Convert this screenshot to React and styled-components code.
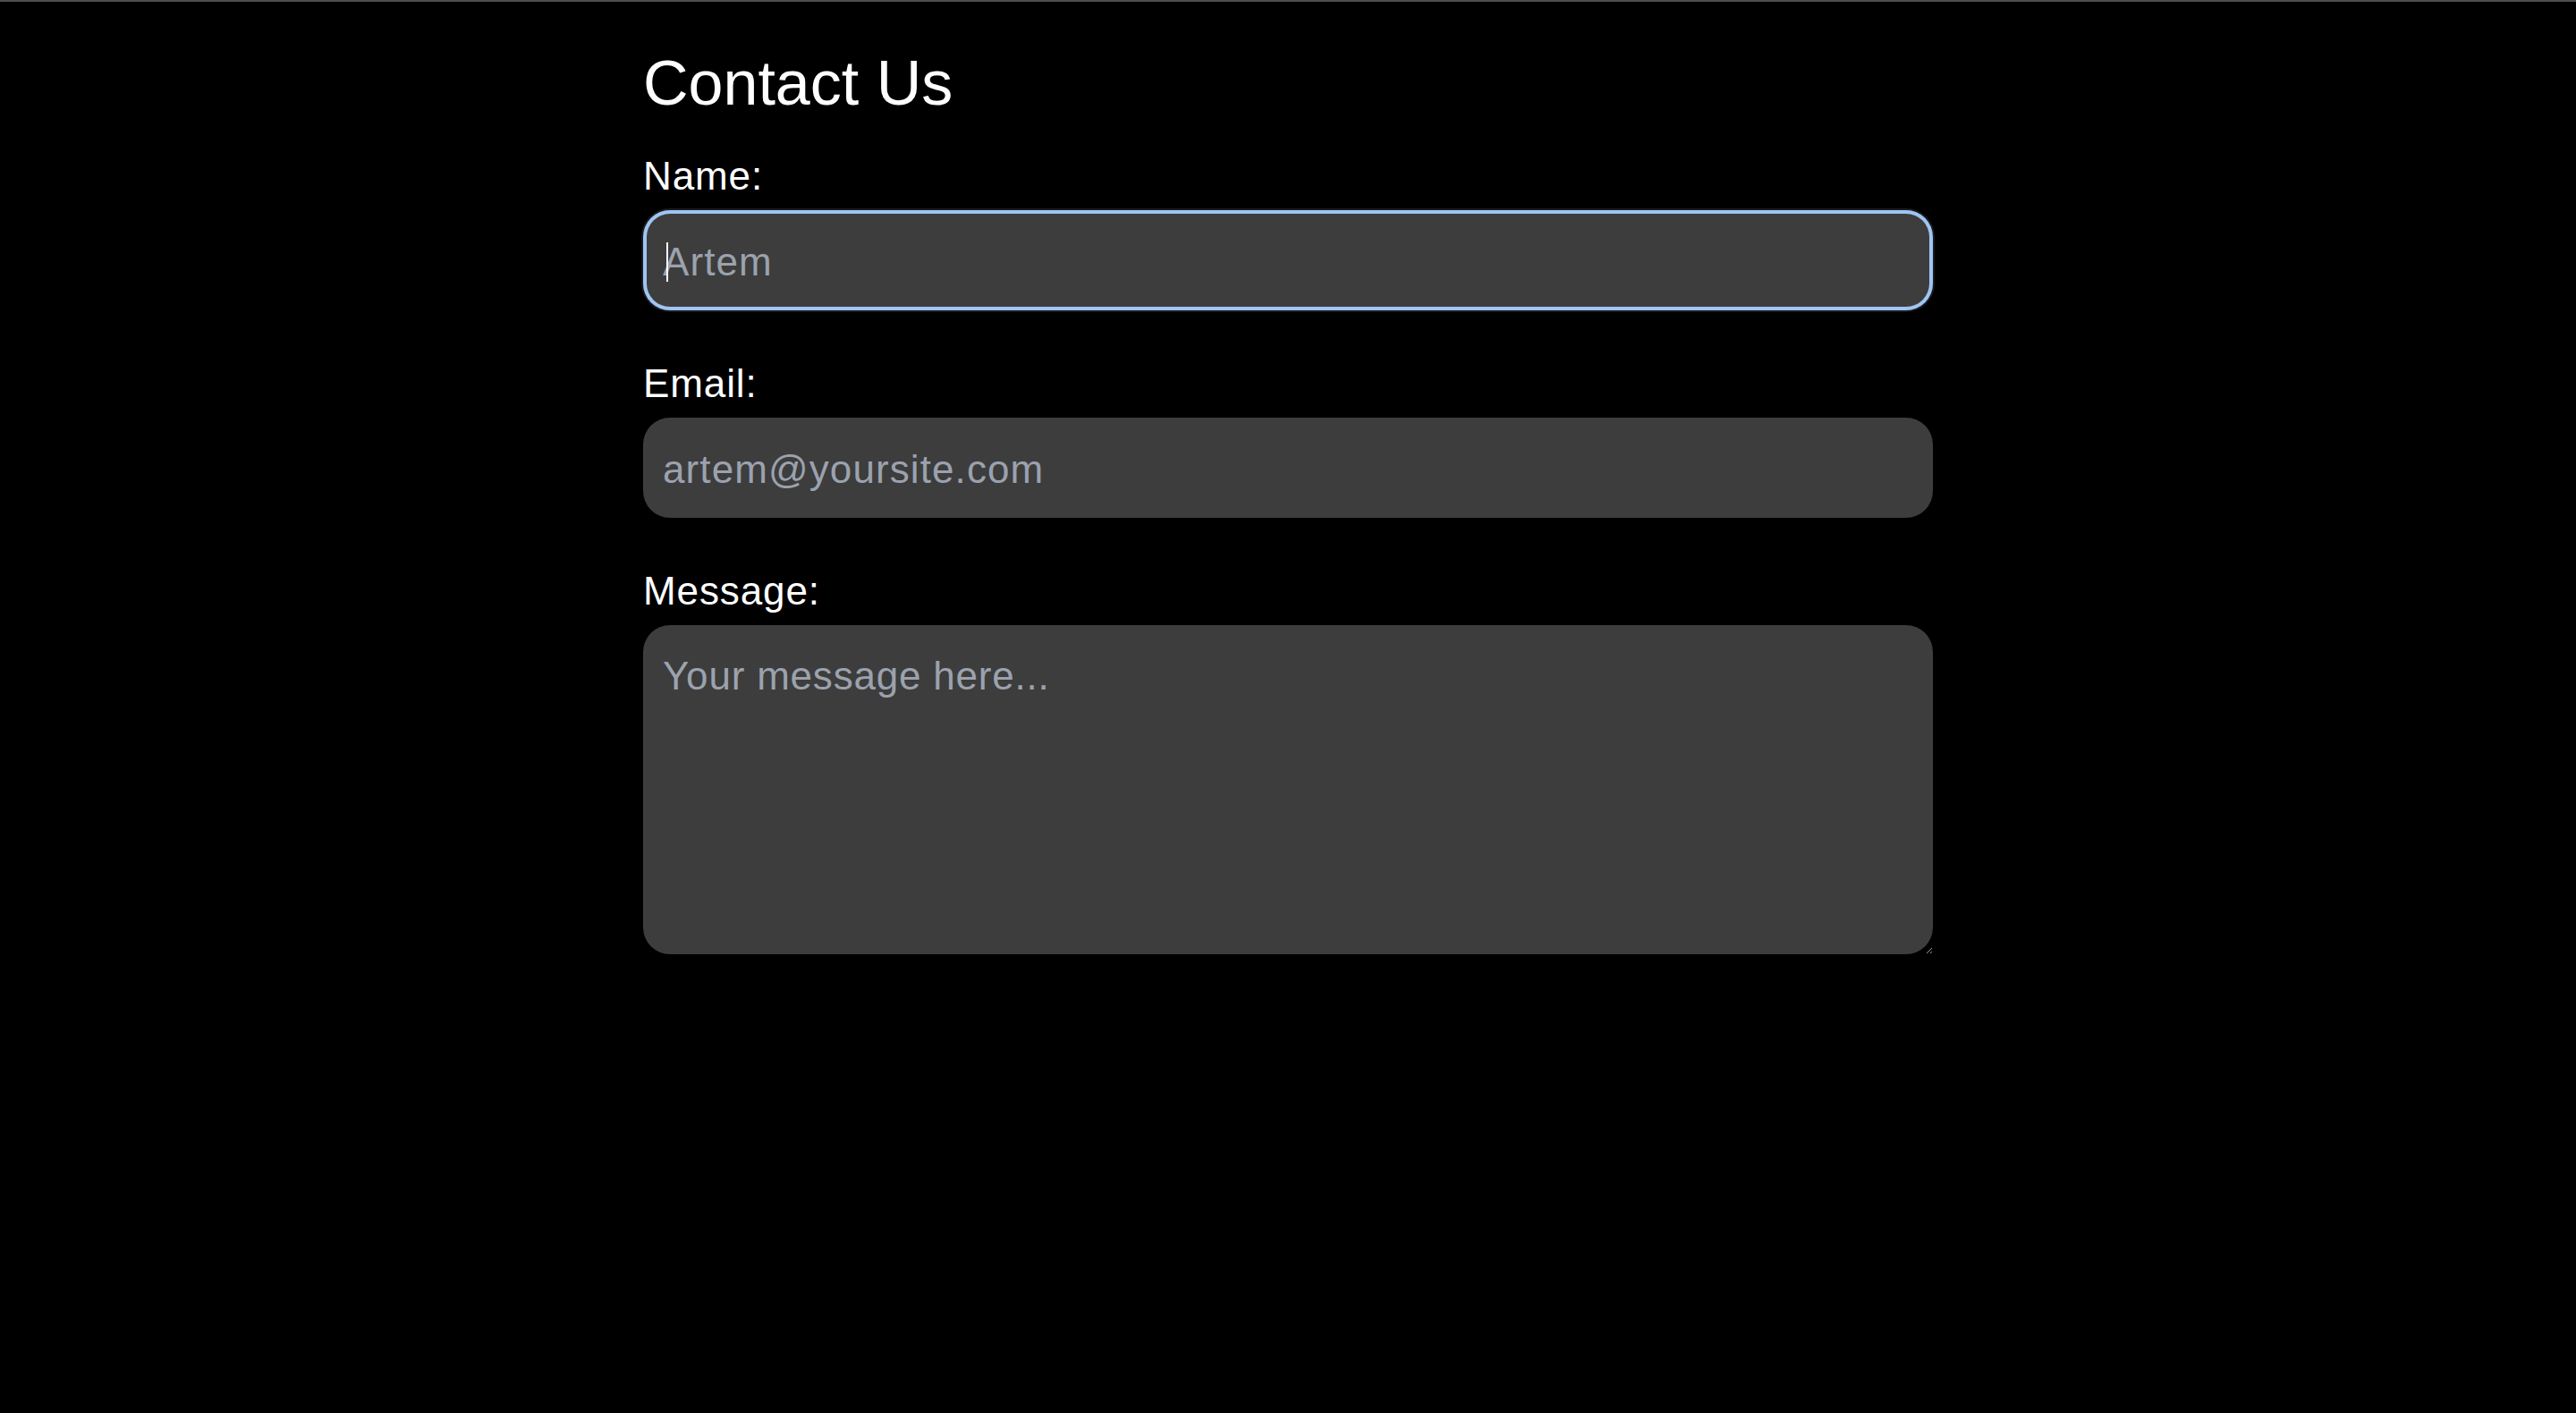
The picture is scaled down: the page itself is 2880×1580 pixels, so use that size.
import styled, { createGlobalStyle } from "styled-components";

const GlobalStyle = createGlobalStyle`
  html, body {
    margin: 0;
    padding: 0;
    background: #000000;
    min-height: 100%;
  }
  body {
    font-family: "Liberation Sans", Arial, sans-serif;
    color: #ffffff;
  }
  * {
    box-sizing: border-box;
  }
`;

const App = () => {
  return (
    <>
      <GlobalStyle />
      <Page>
        <FormContainer>
          <Title>Contact Us</Title>
          <Field>
            <Label htmlFor="name">Name:</Label>
            <CaretWrap>
              <Input id="name" type="text" placeholder="Artem" $active />
            </CaretWrap>
          </Field>
          <Field>
            <Label htmlFor="email">Email:</Label>
            <Input id="email" type="email" placeholder="artem@yoursite.com" />
          </Field>
          <Field>
            <Label htmlFor="message">Message:</Label>
            <TextArea id="message" placeholder="Your message here..." />
          </Field>
        </FormContainer>
      </Page>
    </>
  );
};

export default App;

const Page = styled.div`
  min-height: 1580px;
  border-top: 2px solid #4d4d4f;
  background: #000000;
`;

const FormContainer = styled.form`
  width: 1442px;
  margin: 0 auto;
  padding-top: 49px;
  display: flex;
  flex-direction: column;
  gap: 56px;
`;

const Title = styled.h1`
  margin: 0 0 -20px;
  font-size: 70px;
  line-height: 84px;
  font-weight: 400;
  color: #ffffff;
`;

const Field = styled.div`
  display: flex;
  flex-direction: column;
  gap: 12px;
`;

const Label = styled.label`
  font-size: 44px;
  line-height: 52px;
  letter-spacing: 0.9px;
  color: #ffffff;
`;

const CaretWrap = styled.div`
  position: relative;

  &::after {
    content: "";
    position: absolute;
    left: 26px;
    top: 36px;
    width: 2px;
    height: 44px;
    background: #ffffff;
  }
`;

const Input = styled.input`
  display: block;
  width: 100%;
  height: 112px;
  padding: 4px 22px 0;
  border: none;
  border-radius: 30px;
  background: #3d3d3d;
  color: #ffffff;
  font-family: "Liberation Sans", Arial, sans-serif;
  font-size: 44px;
  letter-spacing: 1.1px;
  outline: none;
  box-shadow: ${(p) =>
    p.$active ? "inset 0 0 0 4px #9fc4f5, 0 0 0 2px #1c1c1c" : "none"};

  &::placeholder {
    color: #9ba2ae;
  }
`;

const TextArea = styled.textarea`
  display: block;
  width: 100%;
  height: 368px;
  padding: 25px 22px;
  border: none;
  border-radius: 30px;
  background: #3d3d3d;
  color: #ffffff;
  font-family: "Liberation Sans", Arial, sans-serif;
  font-size: 44px;
  line-height: 64px;
  letter-spacing: 0.8px;
  outline: none;
  resize: vertical;
  color-scheme: dark;

  &::placeholder {
    color: #9ba2ae;
  }
`;
